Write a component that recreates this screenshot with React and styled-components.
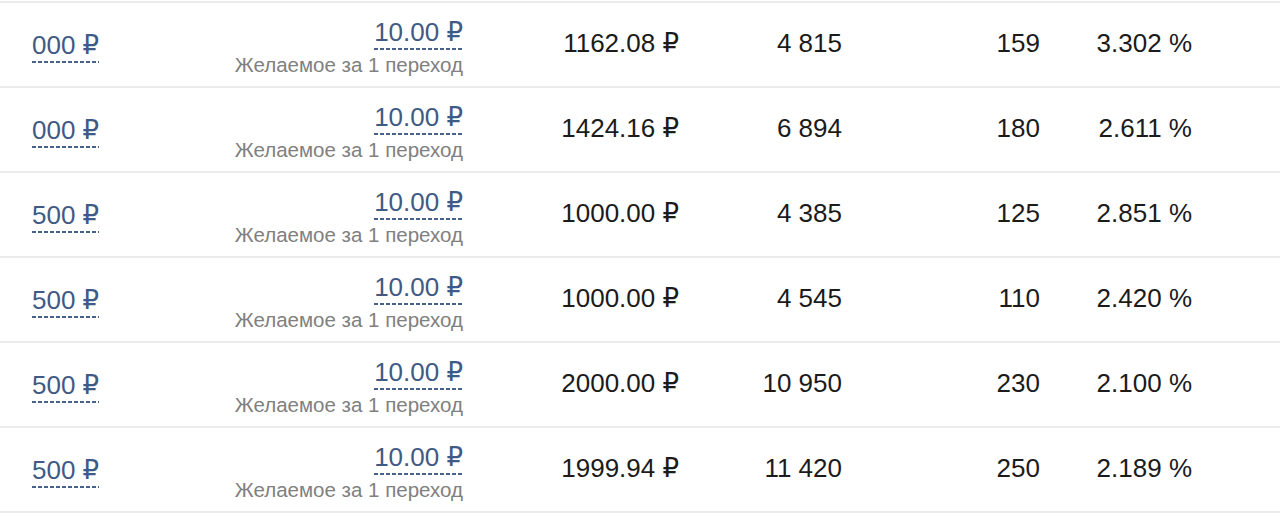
import styled, { createGlobalStyle } from "styled-components";

/* Базовые стили страницы */

const GlobalStyle = createGlobalStyle`
    html, body {
        margin: 0;
        padding: 0;
        background: #ffffff;
    }
    body {
        font-family: "Liberation Sans", Arial, "DejaVu Sans", sans-serif;
        color: #1b1b1b;
    }
`;

const STable = styled.div`
    padding-top: 1px;
    width: 1280px;
    border-bottom: 2px solid #ebebeb;
`;

const SRow = styled.div`
    box-sizing: border-box;
    height: 85px;
    border-top: 2px solid #ebebeb;
    display: grid;
    grid-template-columns: 200px 263px 216px 163px 198px 152px 1fr;
    align-items: center;
`;

/* Ссылка с пунктирным подчёркиванием */

const SDashed = styled.span`
    display: inline-block;
    color: #3f5a84;
    font-size: 26px;
    line-height: 29px;
    padding-bottom: ${(p) => p.$gap || 3}px;
    background-image: linear-gradient(to right, #46628c 65%, transparent 0);
    background-size: 6px 2px;
    background-repeat: repeat-x;
    background-position: left bottom;
`;

const SBudget = styled.div`
    padding-left: 32px;
    padding-top: 4px;
`;

const SBid = styled.div`
    display: flex;
    flex-direction: column;
    align-items: flex-end;
    padding-top: 5px;
`;

const SHint = styled.span`
    margin-top: 3px;
    font-size: 20.5px;
    line-height: 24px;
    color: #808080;
    white-space: nowrap;
`;

const SValue = styled.div`
    text-align: right;
    font-size: 26px;
    line-height: 29px;
    padding-bottom: 2px;
    white-space: nowrap;
`;

const rows = [
    { budget: "000 ₽", spent: "1162.08 ₽", shows: "4 815", clicks: "159", ctr: "3.302 %" },
    { budget: "000 ₽", spent: "1424.16 ₽", shows: "6 894", clicks: "180", ctr: "2.611 %" },
    { budget: "500 ₽", spent: "1000.00 ₽", shows: "4 385", clicks: "125", ctr: "2.851 %" },
    { budget: "500 ₽", spent: "1000.00 ₽", shows: "4 545", clicks: "110", ctr: "2.420 %" },
    { budget: "500 ₽", spent: "2000.00 ₽", shows: "10 950", clicks: "230", ctr: "2.100 %" },
    { budget: "500 ₽", spent: "1999.94 ₽", shows: "11 420", clicks: "250", ctr: "2.189 %" },
];

function StatRow({ row }) {
    return (
        <SRow>
            <SBudget>
                <SDashed $gap={3}>{row.budget}</SDashed>
            </SBudget>
            <SBid>
                <SDashed $gap={3}>10.00 ₽</SDashed>
                <SHint>Желаемое за 1 переход</SHint>
            </SBid>
            <SValue>{row.spent}</SValue>
            <SValue>{row.shows}</SValue>
            <SValue>{row.clicks}</SValue>
            <SValue>{row.ctr}</SValue>
            <div />
        </SRow>
    );
}

export default function App() {
    return (
        <>
            <GlobalStyle />
            <STable>
                {rows.map((row, i) => (
                    <StatRow key={i} row={row} />
                ))}
            </STable>
        </>
    );
}
